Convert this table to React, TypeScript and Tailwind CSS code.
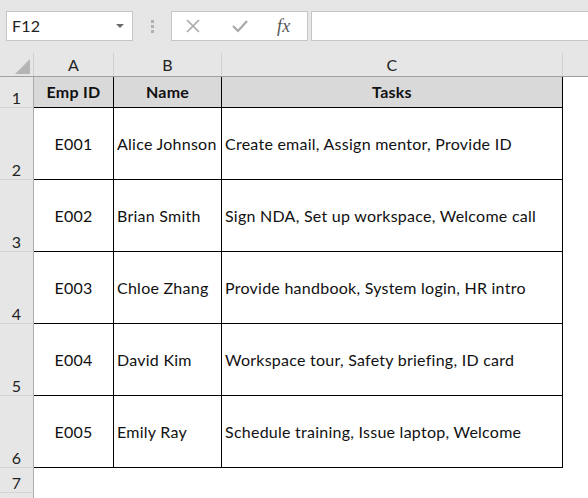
import React from "react"

const rows = [
  { id: "E001", name: "Alice Johnson", tasks: "Create email, Assign mentor, Provide ID" },
  { id: "E002", name: "Brian Smith", tasks: "Sign NDA, Set up workspace, Welcome call" },
  { id: "E003", name: "Chloe Zhang", tasks: "Provide handbook, System login, HR intro" },
  { id: "E004", name: "David Kim", tasks: "Workspace tour, Safety briefing, ID card" },
  { id: "E005", name: "Emily Ray", tasks: "Schedule training, Issue laptop, Welcome" },
]

function RowHead({ n, h }: { n?: number; h: string }) {
  return (
    <div className={`w-[34px] ${h} shrink-0 border-r border-b border-r-[#ababab] border-b-[#d4d4d4] bg-[#e6e6e6] flex items-end justify-center pb-[1px] text-[16px] leading-none text-[#222]`}>
      {n}
    </div>
  )
}

export default function App() {
  return (
    <div className="w-[588px] h-[498px] overflow-hidden bg-white text-[#111] tracking-[0.25px]" style={{ fontFamily: "Lato, 'Open Sans', sans-serif" }}>
      {/* formula bar */}
      <div className="h-[53px] bg-[#e6e6e6] flex items-start pt-[11px] pl-[6px]">
        <div className="w-[127px] h-[30px] bg-white border border-[#c6c6c6] flex items-center justify-between pl-[5px] pr-[8px]">
          <span className="text-[16px] text-[#222]">F12</span>
          <svg width="8" height="5" viewBox="0 0 8 5"><path d="M0 0h8L4 4z" fill="#6b6b6b" /></svg>
        </div>
        <div className="w-[38px] h-[30px] flex flex-col items-center justify-center gap-[2px]">
          <div className="w-[3px] h-[3px] bg-[#b0b0b0]" />
          <div className="w-[3px] h-[3px] bg-[#b0b0b0]" />
          <div className="w-[3px] h-[3px] bg-[#b0b0b0]" />
        </div>
        <div className="w-[137px] h-[30px] bg-white border border-[#c6c6c6] flex items-center">
          <svg className="ml-[13px]" width="16" height="16" viewBox="0 0 16 16"><path d="M2 2l12 12M14 2L2 14" stroke="#a8a8a8" strokeWidth="1.6" /></svg>
          <svg className="ml-[30px]" width="18" height="16" viewBox="0 0 18 16"><path d="M2 8l5 5L16 3" stroke="#a8a8a8" strokeWidth="2.2" fill="none" /></svg>
          <span className="ml-[28px] text-[18px] italic text-[#555]" style={{ fontFamily: "'Liberation Serif', serif" }}>fx</span>
        </div>
        <div className="ml-[3px] flex-1 h-[30px] bg-white border border-[#c6c6c6] border-r-0" />
      </div>

      {/* column headers */}
      <div className="flex h-[24px] bg-[#e6e6e6] border-b border-[#a0a0a0]">
        <div className="w-[34px] shrink-0 border-r border-[#d0d0d0] flex items-end justify-end pr-[3px] pb-[2px]">
          <svg width="15" height="15" viewBox="0 0 15 15"><path d="M15 0V15H0z" fill="#b5b5b5" /></svg>
        </div>
        <div className="w-[80px] shrink-0 border-r border-[#d0d0d0] flex items-center justify-center text-[16px] text-[#222]">A</div>
        <div className="w-[108px] shrink-0 border-r border-[#d0d0d0] flex items-center justify-center text-[16px] text-[#222]">B</div>
        <div className="w-[341px] shrink-0 border-r border-[#d0d0d0] flex items-center justify-center text-[16px] text-[#222]">C</div>
        <div className="flex-1" />
      </div>

      {/* header row */}
      <div className="flex">
        <RowHead n={1} h="h-[31px]" />
        <div className="w-[80px] h-[31px] shrink-0 bg-[#d9d9d9] border-r border-b border-black flex items-center justify-center text-[16px] font-bold">Emp ID</div>
        <div className="w-[108px] h-[31px] shrink-0 bg-[#d9d9d9] border-r border-b border-black flex items-center justify-center text-[16px] font-bold">Name</div>
        <div className="w-[341px] h-[31px] shrink-0 bg-[#d9d9d9] border-r border-b border-black flex items-center justify-center text-[16px] font-bold">Tasks</div>
      </div>

      {rows.map((r, i) => (
        <div key={r.id} className="flex">
          <RowHead n={i + 2} h="h-[72px]" />
          <div className="w-[80px] h-[72px] shrink-0 border-r border-b border-black flex items-center justify-center text-[16px]">{r.id}</div>
          <div className="w-[108px] h-[72px] shrink-0 border-r border-b border-black flex items-center pl-[3px] text-[16px] whitespace-nowrap">{r.name}</div>
          <div className="w-[341px] h-[72px] shrink-0 border-r border-b border-black flex items-center pl-[3px] text-[16px] whitespace-nowrap">{r.tasks}</div>
        </div>
      ))}

      <div className="flex">
        <RowHead n={7} h="h-[25px]" />
      </div>
      <div className="flex">
        <RowHead h="h-[25px]" />
      </div>
    </div>
  )
}
